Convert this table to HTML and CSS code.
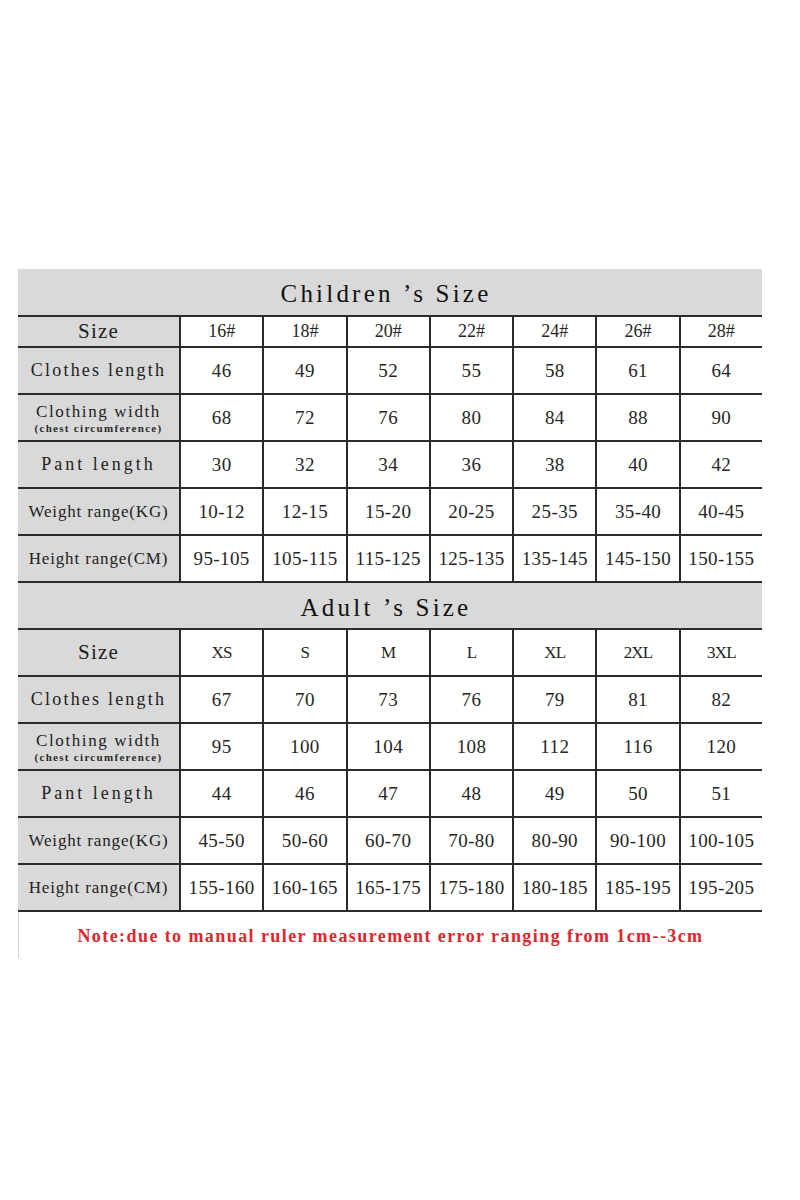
FILE: index.html
```html
<!DOCTYPE html>
<html lang="en">
<head>
<meta charset="utf-8">
<title>Size Chart</title>
<link rel="stylesheet" href="styles.css">
</head>
<body>
<div class="chart">
  <div class="title">Children ’s Size</div>
  <div class="row row-short">
    <div class="lbl lbl-size">Size</div>
    <div class="val val-head">16#</div><div class="val val-head">18#</div><div class="val val-head">20#</div><div class="val val-head">22#</div><div class="val val-head">24#</div><div class="val val-head">26#</div><div class="val val-head">28#</div>
  </div>
  <div class="row">
    <div class="lbl lbl-clothes">Clothes length</div>
    <div class="val">46</div><div class="val">49</div><div class="val">52</div><div class="val">55</div><div class="val">58</div><div class="val">61</div><div class="val">64</div>
  </div>
  <div class="row">
    <div class="lbl lbl-two"><span class="main">Clothing width</span><span class="sub">(chest circumference)</span></div>
    <div class="val">68</div><div class="val">72</div><div class="val">76</div><div class="val">80</div><div class="val">84</div><div class="val">88</div><div class="val">90</div>
  </div>
  <div class="row">
    <div class="lbl lbl-pant">Pant length</div>
    <div class="val">30</div><div class="val">32</div><div class="val">34</div><div class="val">36</div><div class="val">38</div><div class="val">40</div><div class="val">42</div>
  </div>
  <div class="row">
    <div class="lbl lbl-range">Weight range(KG)</div>
    <div class="val">10-12</div><div class="val">12-15</div><div class="val">15-20</div><div class="val">20-25</div><div class="val">25-35</div><div class="val">35-40</div><div class="val">40-45</div>
  </div>
  <div class="row">
    <div class="lbl lbl-range">Height range(CM)</div>
    <div class="val">95-105</div><div class="val">105-115</div><div class="val">115-125</div><div class="val">125-135</div><div class="val">135-145</div><div class="val">145-150</div><div class="val">150-155</div>
  </div>

  <div class="title title-bordered">Adult ’s Size</div>
  <div class="row">
    <div class="lbl lbl-size">Size</div>
    <div class="val val-letter">XS</div><div class="val val-letter">S</div><div class="val val-letter">M</div><div class="val val-letter">L</div><div class="val val-letter">XL</div><div class="val val-letter">2XL</div><div class="val val-letter">3XL</div>
  </div>
  <div class="row">
    <div class="lbl lbl-clothes">Clothes length</div>
    <div class="val">67</div><div class="val">70</div><div class="val">73</div><div class="val">76</div><div class="val">79</div><div class="val">81</div><div class="val">82</div>
  </div>
  <div class="row">
    <div class="lbl lbl-two"><span class="main">Clothing width</span><span class="sub">(chest circumference)</span></div>
    <div class="val">95</div><div class="val">100</div><div class="val">104</div><div class="val">108</div><div class="val">112</div><div class="val">116</div><div class="val">120</div>
  </div>
  <div class="row">
    <div class="lbl lbl-pant">Pant length</div>
    <div class="val">44</div><div class="val">46</div><div class="val">47</div><div class="val">48</div><div class="val">49</div><div class="val">50</div><div class="val">51</div>
  </div>
  <div class="row">
    <div class="lbl lbl-range">Weight range(KG)</div>
    <div class="val">45-50</div><div class="val">50-60</div><div class="val">60-70</div><div class="val">70-80</div><div class="val">80-90</div><div class="val">90-100</div><div class="val">100-105</div>
  </div>
  <div class="row row-last">
    <div class="lbl lbl-range">Height range(CM)</div>
    <div class="val">155-160</div><div class="val">160-165</div><div class="val">165-175</div><div class="val">175-180</div><div class="val">180-185</div><div class="val">185-195</div><div class="val">195-205</div>
  </div>
  <div class="note">Note:due to manual ruler measurement error ranging from 1cm--3cm</div>
</div>
</body>
</html>
```

FILE: styles.css
```css
html, body {
  margin: 0;
  padding: 0;
  background: #ffffff;
}

body {
  font-family: "Liberation Serif", "Times New Roman", serif;
  color: #1e1e1e;
}

.chart {
  width: 744px;
  margin: 269px 0 0 18px;
}

.title {
  height: 46px;
  background: #d9d9d9;
  display: flex;
  align-items: center;
  justify-content: center;
  padding-right: 8px;
  padding-top: 4px;
  box-sizing: border-box;
  font-size: 25px;
  color: #111111;
  letter-spacing: 3.2px;
}

.title-bordered {
  height: 47px;
  border-top: 2px solid #2b2b2b;
}

.row {
  display: grid;
  grid-template-columns: 161px repeat(7, 1fr);
  height: 45px;
  border-top: 2px solid #2b2b2b;
}

.row-short {
  height: 29px;
}

.row-last {
  border-bottom: 2px solid #2b2b2b;
}

.lbl {
  background: #d9d9d9;
  display: flex;
  align-items: center;
  justify-content: center;
  font-size: 18px;
  color: #222222;
  white-space: nowrap;
}

.lbl-size {
  font-size: 21px;
  letter-spacing: 1.2px;
}

.lbl-clothes {
  letter-spacing: 2.2px;
}

.lbl-pant {
  letter-spacing: 3px;
}

.lbl-range {
  font-size: 17px;
  letter-spacing: 0.85px;
}

.lbl-two {
  flex-direction: column;
  line-height: 1;
  padding-top: 2px;
}

.lbl-two .main {
  font-size: 17px;
  letter-spacing: 1.6px;
}

.lbl-two .sub {
  font-size: 11px;
  font-weight: bold;
  margin-top: 3px;
  letter-spacing: 1.3px;
  color: #2a2a2a;
}

.val {
  border-left: 2px solid #2b2b2b;
  display: flex;
  align-items: center;
  justify-content: center;
  font-size: 19px;
  letter-spacing: 0.4px;
  color: #262626;
  white-space: nowrap;
}

.val-head {
  font-size: 18px;
  letter-spacing: 0;
}

.val-letter {
  font-size: 17px;
  letter-spacing: -0.8px;
}

.note {
  height: 46px;
  border-left: 1px solid #d4d4d4;
  display: flex;
  align-items: center;
  justify-content: center;
  padding-top: 2px;
  box-sizing: border-box;
  font-size: 18px;
  font-weight: bold;
  color: #e0262b;
  white-space: nowrap;
  letter-spacing: 1.42px;
}
```
